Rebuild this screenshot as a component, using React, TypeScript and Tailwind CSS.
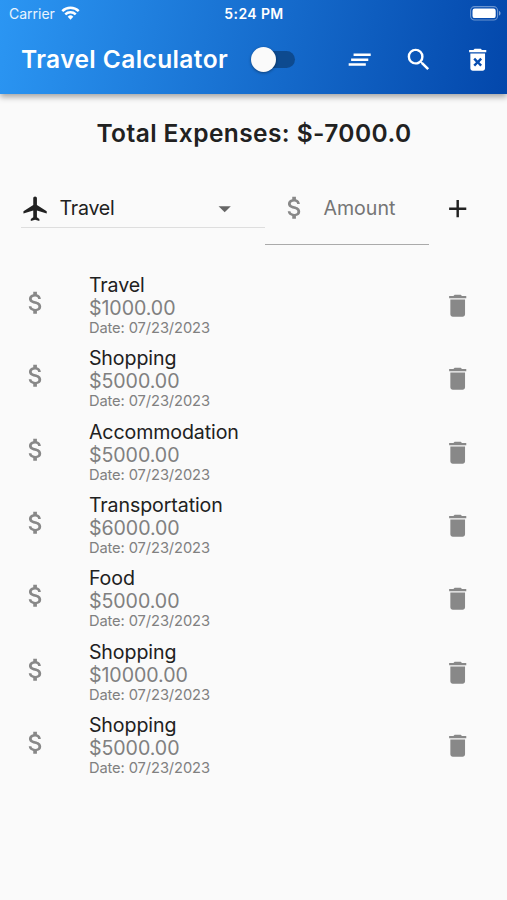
import { useState } from 'react';
import { MdAdd, MdArrowDropDown, MdAttachMoney, MdClearAll, MdDelete, MdDeleteForever, MdSearch } from 'react-icons/md';

type Expense = {
	category: string;
	amount: number;
	date: string;
}

const INITIAL: Expense[] = [
	{ category: 'Travel', amount: 1000, date: '07/23/2023' },
	{ category: 'Shopping', amount: 5000, date: '07/23/2023' },
	{ category: 'Accommodation', amount: 5000, date: '07/23/2023' },
	{ category: 'Transportation', amount: 6000, date: '07/23/2023' },
	{ category: 'Food', amount: 5000, date: '07/23/2023' },
	{ category: 'Shopping', amount: 10000, date: '07/23/2023' },
	{ category: 'Shopping', amount: 5000, date: '07/23/2023' },
]

const WifiIcon = () => (
	<svg viewBox="0 0 20 15" className="w-[19px] h-[14px] mb-[2px]" fill="none" stroke="currentColor" strokeWidth="2.7">
		<path d="M1.2 5.4a12.6 12.6 0 0 1 17.6 0" />
		<path d="M4.4 8.9a8 8 0 0 1 11.2 0" />
		<path d="M10 14.6l-3-3.2a4.3 4.3 0 0 1 6 0z" fill="currentColor" stroke="none" />
	</svg>
)

const BatteryIcon = () => (
	<svg viewBox="0 0 31 15" className="w-[31px] h-[15px]">
		<rect x="0.6" y="0.6" width="27" height="13.4" rx="4" fill="none" stroke="#fff" strokeOpacity="0.4" strokeWidth="1.1" />
		<rect x="2.5" y="2.5" width="23.2" height="9.6" rx="2.2" fill="#fff" />
		<path d="M29 5v4.6c1-.4 1.5-1.2 1.5-2.3S30 5.4 29 5z" fill="#fff" fillOpacity="0.5" />
	</svg>
)

const PlaneIcon = () => (
	<svg viewBox="0 0 24 24" className="w-[29.4px] h-[29.4px] shrink-0" fill="currentColor">
		<path d="M21 16v-2l-8-5V3.5c0-.83-.67-1.500-1.500-1.500S10 2.670 10 3.500V9l-8 5v2l8-2.500V19l-2 1.500V22l3.500-1 3.500 1v-1.500L13 19v-5.500l8 2.500z" />
	</svg>
)

const App = () => {
	const [expenses, setExpenses] = useState<Expense[]>(INITIAL);
	const [dark, setDark] = useState(false);

	const remove = (index: number) => {
		setExpenses(prev => prev.filter((_, i) => i !== index));
	}

	return (
		<div className="w-[507px] h-[900px] overflow-hidden bg-[#fafafa] font-['Inter','Liberation_Sans',sans-serif] text-[#212121]">
			{/* App bar */}
			<header className="h-[94px] bg-[linear-gradient(100.5deg,#2b96f3,#0347ab)] text-white shadow-[0_3px_6px_rgba(0,0,0,0.35)]">
				<div className="h-[27px] grid grid-cols-3 items-center pl-[9px] pr-[6px] text-[14px] leading-none">
					<div className="flex items-center gap-[6px]">
						<span className="text-white/90">Carrier</span>
						<WifiIcon />
					</div>
					<div className="-ml-[2px] text-center font-semibold tracking-[0.4px]">5:24 PM</div>
					<div className="flex justify-end">
						<BatteryIcon />
					</div>
				</div>
				<div className="h-[67px] flex items-center pl-[21px] pr-[15px] pb-[2px]">
					<h1 className="w-[229px] text-[24.5px] font-semibold tracking-[0.4px] whitespace-nowrap">Travel Calculator</h1>
					<button
						onClick={() => setDark(prev => !prev)}
						aria-label="Toggle theme"
						className="w-[46px] h-[25px] flex items-center"
					>
						<span className="w-[44px] h-[17px] ml-[1px] flex items-center rounded-full bg-[#0d4a8f]">
							<span className={`w-[25px] h-[25px] shrink-0 rounded-full bg-[#fafafa] shadow-[0_1px_3px_rgba(0,0,0,0.4)] ${dark ? 'ml-[19px]' : ''}`} />
						</span>
					</button>
					<div className="ml-auto flex items-center gap-[29.4px]">
						<MdClearAll className="size-[29.4px]" />
						<MdSearch className="size-[29.4px]" />
						<MdDeleteForever className="size-[29.4px]" />
					</div>
				</div>
			</header>

			<h2 className="h-[78px] flex items-center justify-center pl-[1px] text-[24.5px] font-semibold tracking-[0.42px]">
				Total Expenses: $-7000.0
			</h2>

			{/* New expense form */}
			<div className="h-[73px] flex items-start pl-[21px] pr-[20px]">
				<div className="w-[244px] h-[56px] flex items-center border-b border-[#dedede] pt-[18px]">
					<PlaneIcon />
					<span className="ml-[9px] text-[19.6px] tracking-[-0.2px]">Travel</span>
					<MdArrowDropDown className="ml-auto mr-[26px] size-[29.4px] text-[#666]" />
				</div>
				<div className="w-[164px] h-[73px] flex items-center border-b border-[#aaa] text-[#757575]">
					<MdAttachMoney className="ml-[15px] size-[29.4px] text-[#888]" />
					<span className="ml-[14px] pt-[1px] text-[19.6px] tracking-[0px]">Amount</span>
				</div>
				<button className="h-[73px] ml-[14px]" aria-label="Add expense">
					<MdAdd className="size-[29.4px]" />
				</button>
			</div>

			{/* Expenses */}
			<ul className="mt-[24px]">
				{expenses.map((expense, i) => (
					<li key={i} className="h-[73.35px] flex items-center pl-[20.5px] pr-[34.5px]">
						<MdAttachMoney className="size-[29.4px] mb-[6px] text-[#888]" />
						<div className="ml-[39px] pb-[1.5px] flex-1">
							<p className="text-[19.6px] leading-[24px] tracking-[-0.1px]">{expense.category}</p>
							<p className="text-[19.6px] leading-[22px] tracking-[-0.05px] text-[#808080]">${expense.amount.toFixed(2)}</p>
							<p className="text-[14.7px] leading-[18px] tracking-[-0.1px] text-[#808080]">Date: {expense.date}</p>
						</div>
						<button onClick={() => remove(i)} aria-label="Delete expense">
							<MdDelete className="size-[29.4px] text-[#888]" />
						</button>
					</li>
				))}
			</ul>
		</div>
	)
}

export default App;
